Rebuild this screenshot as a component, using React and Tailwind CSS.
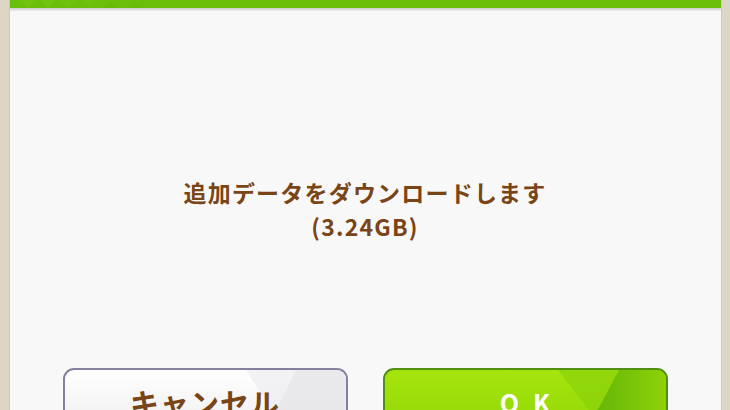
import React from "react";

export default function App() {
  return (
    <div className="w-[730px] h-[410px] overflow-hidden bg-[#ddd6c6] flex justify-center" style={{ fontFamily: '"Noto Sans CJK JP", "Noto Sans", sans-serif' }}>
      <div className="w-[713px] h-full flex flex-col bg-[#f8f8f8] border-x border-[#c9c9c9]">
        <div className="relative shrink-0 h-[8px] bg-[#6abf0b] overflow-hidden">
          <svg className="absolute left-0 top-0" width="160" height="8" viewBox="0 0 160 8">
            <polygon points="10,0 18,8 26,0" fill="#78c816" opacity="0.5" />
            <polygon points="30,0 38,8 46,0" fill="#7acb1a" opacity="0.5" />
            <polygon points="50,0 58,8 66,0" fill="#78c816" opacity="0.4" />
            <polygon points="72,0 80,8 88,0" fill="#78c816" opacity="0.3" />
            <polygon points="94,8 100,2 106,8" fill="#62b208" opacity="0.4" />
            <polygon points="118,8 124,3 130,8" fill="#62b208" opacity="0.3" />
          </svg>
        </div>
        <div className="shrink-0 h-[3px] bg-gradient-to-b from-[#cfcfcf] to-[#ececec]" />
        <div className="flex-1 flex flex-col items-center min-h-0">
          <div className="shrink-0 mt-[164px] flex flex-col items-center text-[#7a4516] font-bold text-[23px] leading-[34px] tracking-[1.2px]">
            <div>追加データをダウンロードします</div>
            <div>(3.24GB)</div>
          </div>
          <div className="shrink-0 mt-[125px] flex gap-[35px]">
            <div className="relative w-[285px] h-[62px] rounded-[11px] border-2 border-[#877f9c] bg-gradient-to-b from-white to-[#efefef] overflow-hidden flex justify-center">
              <svg className="absolute right-0 top-0" width="140" height="62" viewBox="0 0 140 62">
                <polygon points="40,0 140,0 140,62 80,62" fill="#ececef" opacity="0.7" />
                <polygon points="90,0 140,0 140,62 60,62" fill="#e2e2e6" opacity="0.5" />
              </svg>
              <span className="relative mt-[12px] text-[29px] leading-[40px] font-bold text-[#7a4516] tracking-[1px]">キャンセル</span>
            </div>
            <div className="relative w-[285px] h-[62px] rounded-[11px] border-2 border-[#4f8f12] bg-gradient-to-b from-[#a6e40d] to-[#92d807] overflow-hidden flex justify-center">
              <svg className="absolute right-0 top-0" width="140" height="62" viewBox="0 0 140 62">
                <defs>
                  <linearGradient id="okdark" x1="0" y1="0" x2="1" y2="0">
                    <stop offset="0" stopColor="#5fb208" />
                    <stop offset="1" stopColor="#8ed208" />
                  </linearGradient>
                </defs>
                <polygon points="32,0 140,0 140,62 80,62" fill="#86cf0a" opacity="0.6" />
                <polygon points="93,0 140,0 140,62 60,62" fill="url(#okdark)" />
              </svg>
              <span className="relative mt-[15px] text-[25px] leading-[34px] font-bold text-white tracking-[14px] pl-[14px]">OK</span>
            </div>
          </div>
        </div>
      </div>
    </div>
  );
}
